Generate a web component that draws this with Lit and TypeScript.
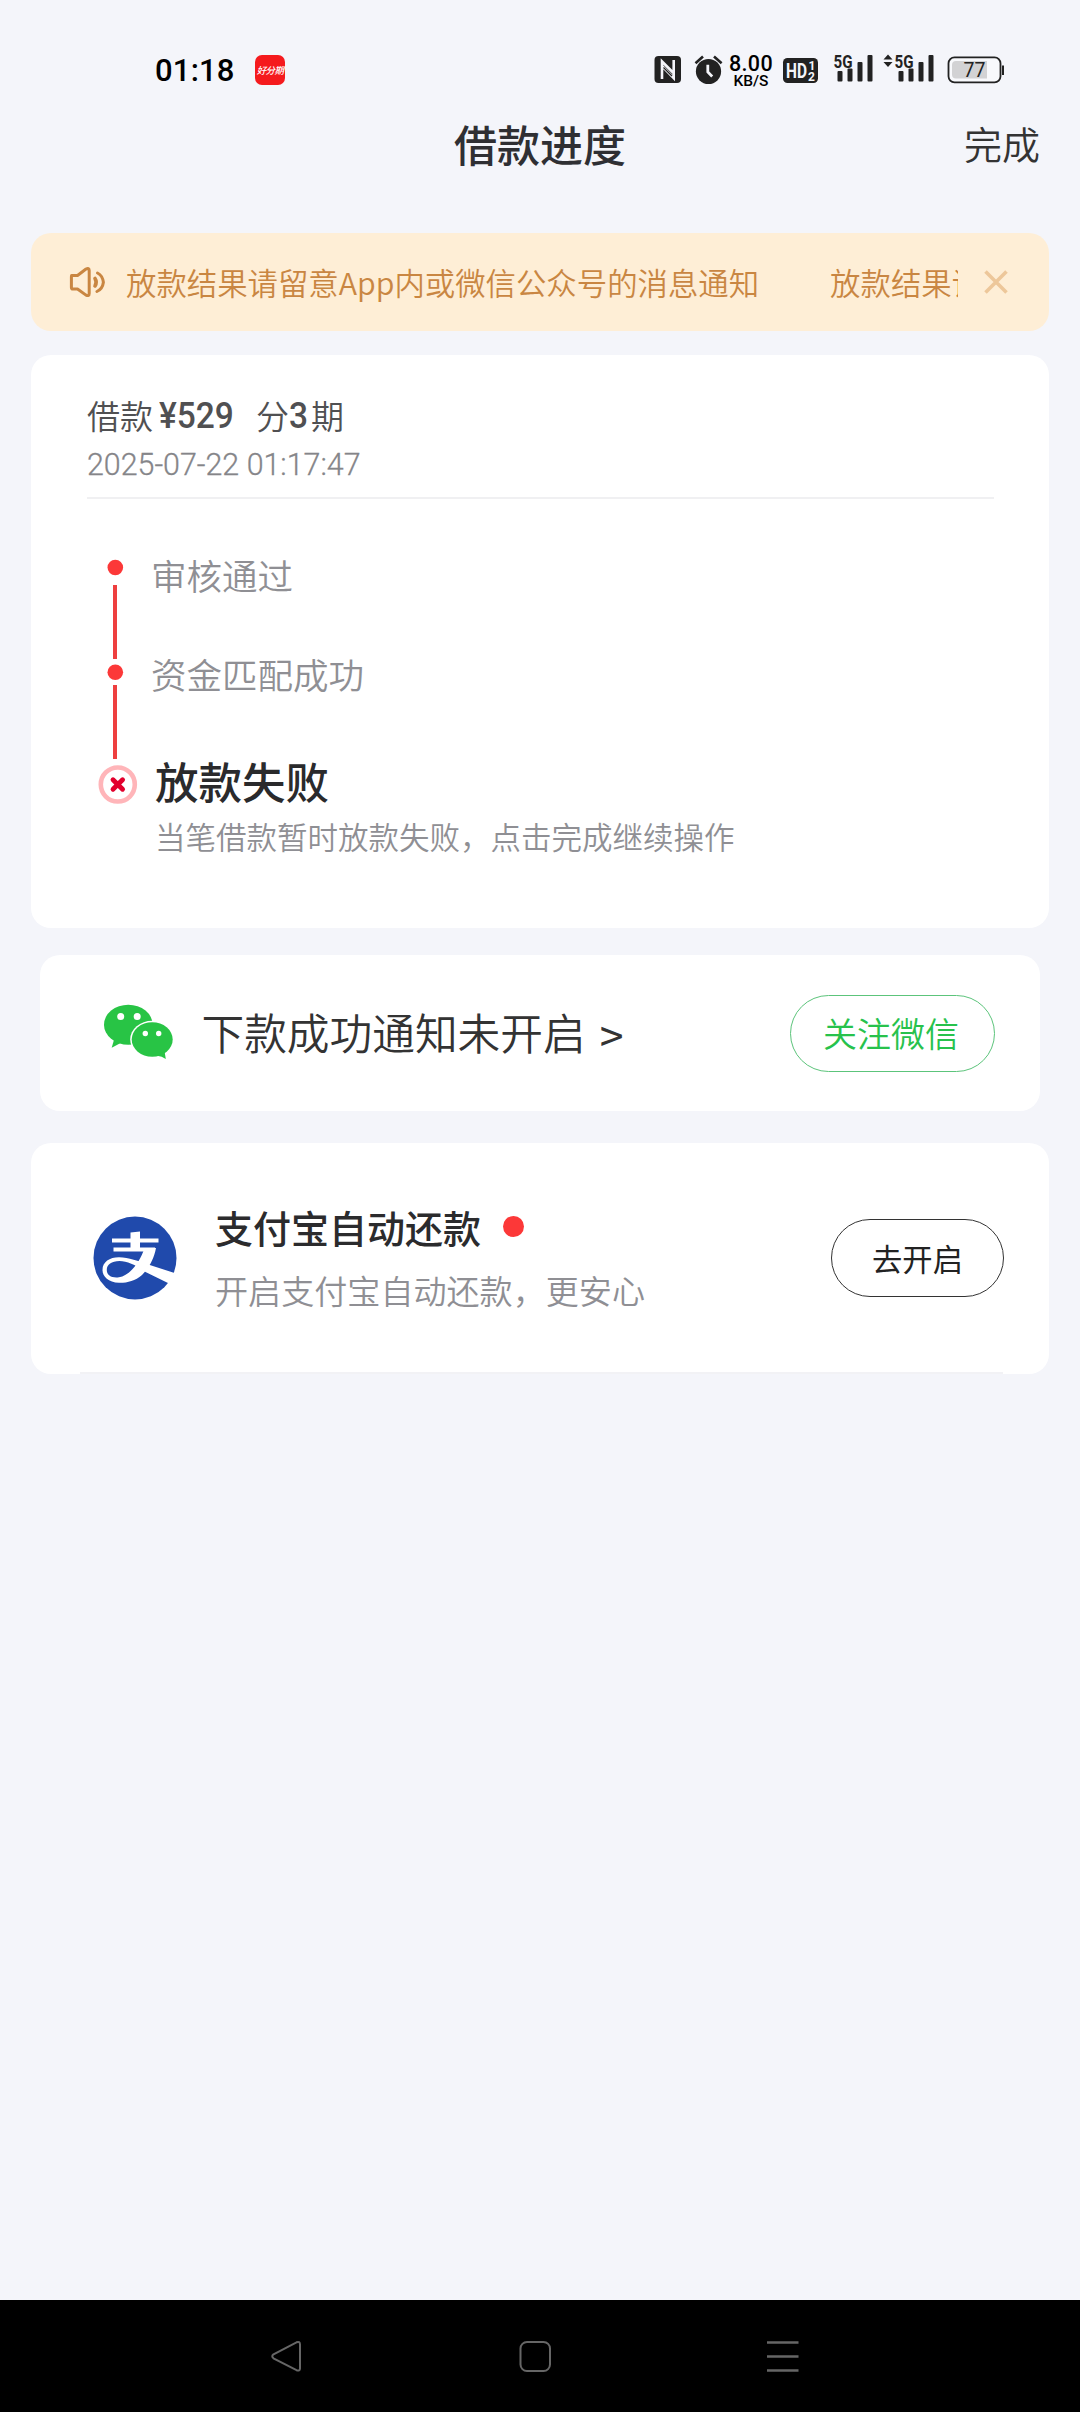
import { LitElement, html, css, svg } from "lit";
import { customElement } from "lit/decorators.js";

const FONT = css`"Noto Sans CJK SC", "Noto Sans", sans-serif`;

@customElement("status-bar")
class StatusBar extends LitElement {
  static styles = css`
    :host { display: flex; height: 100px; padding: 0 76px 0 155px; box-sizing: border-box; align-items: flex-start; color: #000; font-family: Roboto, sans-serif; }
    svg { display: block; flex: none; }
    .time { font-size: 31px; line-height: 36px; margin-top: 53px; width: 100px; font-weight: 500; letter-spacing: 0.2px; white-space: nowrap; }
    .app { width: 30px; height: 30px; margin-top: 55px; border-radius: 7px; background: #f51a1d; color: #fff; display: flex; align-items: center; justify-content: center; font: italic 500 9.5px/30px ${FONT}; letter-spacing: -0.6px; white-space: nowrap; }
    .icons { display: flex; margin: 50px 0 0 auto; }
    .speed { width: 44px; margin-right: 8px; text-align: center; padding-top: 4px; font-weight: 500; white-space: nowrap; }
    .rate { font-size: 21.5px; line-height: 19px; letter-spacing: 0.3px; }
    .unit { font-size: 15.5px; line-height: 17px; }
  `;

  private bars(x: number) {
    return svg`<g fill="#222">
      <rect x=${x} y="21" width="5" height="10.5" rx="1"/>
      <rect x=${x + 10} y="18.500" width="5" height="13" rx="1"/>
      <rect x=${x + 20} y="12" width="5" height="19.5" rx="1"/>
      <rect x=${x + 30} y="5" width="5" height="26.5" rx="1"/></g>`;
  }

  render() {
    return html`
      <div class="time">01:18</div>
      <div class="app">好分期</div>
      <div class="icons">
        <svg width="75" height="38" viewBox="0 0 75 38">
          <rect x="0.5" y="6" width="26.5" height="27" rx="4" fill="#222"/>
          <path d="M8 29V11.500L19.500 23M19.700 10v18L8 16" fill="none" stroke="#f4f5fa" stroke-width="2.600"/>
          <path d="M9.500 17.500L18 26" fill="none" stroke="#222" stroke-width="1.200"/>
          <circle cx="54.500" cy="21.500" r="12.600" fill="#222"/>
          <path d="M41.500 13.200L49 6.500M67.600 13.200L60 6.500" stroke="#222" stroke-width="2.600" fill="none"/>
          <path d="M53.800 14.800v7.200l4.400 4.400" stroke="#f4f5fa" stroke-width="2.800" fill="none"/>
        </svg>
        <div class="speed"><div class="rate">8.00</div><div class="unit">KB/S</div></div>
        <svg width="223" height="38" viewBox="781 0 223 38">
          <rect x="783" y="8" width="35" height="25" rx="4.500" fill="#222"/>
          <text x="786" y="27.500" font-family="Roboto" font-weight="700" font-size="19.500" fill="#f4f5fa" textLength="21" lengthAdjust="spacingAndGlyphs">HD</text>
          <text x="808.500" y="20" font-family="Roboto" font-weight="700" font-size="12" fill="#f4f5fa">1</text>
          <text x="808" y="30.500" font-family="Roboto" font-weight="700" font-size="12" fill="#f4f5fa">2</text>
          <text x="833.500" y="17.500" font-family="Roboto" font-weight="700" font-size="18.500" fill="#222" textLength="19" lengthAdjust="spacingAndGlyphs">5G</text>
          ${this.bars(837.5)}
          <path d="M883.500 9.500l4.500-5 4.500 5zM883.500 12l4.500 5 4.500-5z" fill="#222"/>
          <text x="894.500" y="17.500" font-family="Roboto" font-weight="700" font-size="18.500" fill="#222" textLength="19" lengthAdjust="spacingAndGlyphs">5G</text>
          ${this.bars(898.5)}
          <rect x="948.500" y="7.300" width="52" height="25" rx="6" fill="#f8f9fc" stroke="#222" stroke-width="1.800"/>
          <path d="M987 11H956a4 4 0 0 0-4 4v9.500a4 4 0 0 0 4 4h31z" fill="#d2d2d4"/>
          <rect x="1002" y="15.500" width="2" height="9.500" fill="#222"/>
          <text x="963.500" y="27" font-family="Roboto" font-size="19.500" fill="#222">77</text>
        </svg>
      </div>`;
  }
}

@customElement("notice-bar")
class NoticeBar extends LitElement {
  static styles = css`
    :host { display: flex; height: 98px; border-radius: 20px; background: #feeed6; align-items: center; padding-left: 38.4px; box-sizing: border-box; color: #c98642; font-family: ${FONT}; }
    svg { flex: none; display: block; }
    .view { margin-left: 19px; width: 832px; overflow: hidden; display: flex; gap: 71px; white-space: nowrap; font-size: 30.4px; line-height: 48px; font-weight: 350; }
    .view span { flex: none; }
    .close { margin-left: 26px; }
  `;
  render() {
    const message = "放款结果请留意App内或微信公众号的消息通知";
    return html`
      <svg width="38" height="32" viewBox="0 0 38 32" fill="none" stroke="#c98642" stroke-width="3" stroke-linejoin="round" stroke-linecap="round">
        <path d="M2.500 9.500H8.500L17 3q3.200-1.600 3.200 1.600v23q0 3-3.200 1.500L8.500 23H4q-1.600 0-1.600-1.600V10.600"/>
        <path d="M26 12.500q2.400 3.700 0 7.400" stroke-width="3.600"/><path d="M28.500 7q5 2.500 5.900 9.300-.8 6.700-6.500 9.200"/>
      </svg>
      <div class="view"><span>${message}</span><span>${message}</span></div>
      <svg class="close" width="24" height="24" viewBox="0 0 24 24"><path d="M1.500 1.500l21 21M22.500 1.500l-21 21" stroke="#edc79a" stroke-width="3.600"/></svg>`;
  }
}

@customElement("progress-card")
class ProgressCard extends LitElement {
  static styles = css`
    :host { display: block; height: 573px; border-radius: 20px; background: #fff; padding: 36px 55px 0 56.4px; box-sizing: border-box; font-family: ${FONT}; }
    .sum { display: flex; height: 48px; line-height: 48px; font-size: 33px; font-weight: 350; color: #505052; white-space: nowrap; }
    .num { font-family: Roboto, sans-serif; font-weight: 500; font-size: 36px; transform-origin: 0 50%; transform: scaleX(0.93); position: relative; top: 1px; }
    .amount { width: 97px; margin-left: 6px; }
    .count { width: 22px; }
    .date { height: 36px; line-height: 36px; margin-top: 8px; font-family: Roboto, sans-serif; font-weight: 300; font-size: 31px; color: #858589; -webkit-text-stroke: 0.3px #858589; transform-origin: 0 50%; transform: scaleX(0.98); white-space: pre; }
    .rule { height: 2px; background: #f0f0f2; margin-top: 14px; }
    .steps { display: flex; padding-top: 56px; }
    .steps svg { display: block; flex: none; margin-left: 6.600px; }
    .labels { display: flex; flex-direction: column; white-space: nowrap; margin: -5px 0 0 9.500px; color: #8f8f94; }
    .step { font-size: 35.500px; line-height: 50px; height: 98.500px; font-weight: 350; }
    .fail { font-size: 43.500px; line-height: 60px; font-weight: 500; color: #2a2a2c; margin: 4px 0 0 4px; }
    .note { font-size: 30.500px; line-height: 46px; margin: 2px 0 0 4px; font-weight: 350; }
  `;
  render() {
    return html`
      <div class="sum"><span>借款</span><span class="num amount">¥529</span><span>分</span><span class="num count">3</span><span>期</span></div>
      <div class="date">2025-07-22 01:17:47</div>
      <div class="rule"></div>
      <div class="steps">
        <svg width="48" height="254" viewBox="94 555 48 254">
          <g fill="#fc3838"><circle cx="115.300" cy="567.500" r="7.800"/><circle cx="115.300" cy="672.300" r="7.800"/></g>
          <g fill="#ee3f3f"><rect x="113" y="585" width="4" height="74"/><rect x="113" y="685" width="4" height="74"/></g>
          <circle cx="117.800" cy="784.500" r="17" fill="#fff" stroke="#ffb5b9" stroke-width="4.600"/>
          <path d="M113 779.700l9.600 9.600m0-9.600l-9.600 9.600" stroke="#e2002d" stroke-width="4.800" stroke-linecap="round"/>
        </svg>
        <div class="labels">
          <div class="step">审核通过</div>
          <div class="step">资金匹配成功</div>
          <div class="fail">放款失败</div>
          <div class="note">当笔借款暂时放款失败，点击完成继续操作</div>
        </div>
      </div>`;
  }
}

@customElement("wechat-card")
class WechatCard extends LitElement {
  static styles = css`
    :host { display: flex; height: 156px; border-radius: 20px; background: #fff; margin: 0 9.400px; padding: 0 45px 0 63px; box-sizing: border-box; align-items: center; font-family: ${FONT}; white-space: nowrap; }
    svg { display: block; flex: none; }
    .title { font-size: 42.700px; line-height: 60px; color: #333; font-weight: 350; margin-left: 26.500px; padding-bottom: 5px; }
    .arrow { font-size: 42.700px; line-height: 60px; color: #333; margin-left: 14px; }
    .btn { margin: 0 0 0 auto; box-sizing: border-box; width: 205px; height: 77px; border: 1.500px solid #5cc47b; border-radius: 39px; color: #27c24c; font-size: 34px; line-height: 74px; padding-right: 3px; font-weight: 350; text-align: center; }
  `;
  render() {
    return html`
      <svg width="72" height="58" viewBox="-1 0 72 58">
        <g fill="#28c445"><ellipse cx="24.300" cy="20.700" rx="24.300" ry="20"/><path d="M10.500 34L7.700 43.800 18.500 38z"/></g>
        <ellipse cx="48.200" cy="35.500" rx="22" ry="18.700" fill="#fff"/>
        <g fill="#28c445"><ellipse cx="48.200" cy="35.500" rx="20.500" ry="17.200"/><path d="M53 51.800q5 .2 8.800 3.200L60.500 47z"/></g>
        <g fill="#fff"><circle cx="16.700" cy="12.600" r="3.500"/><circle cx="33.200" cy="12.600" r="3.500"/><circle cx="41.300" cy="29.500" r="2.700"/><circle cx="54.700" cy="29.500" r="2.700"/></g>
      </svg>
      <span class="title">下款成功通知未开启</span><span class="arrow">&gt;</span>
      <div class="btn">关注微信</div>`;
  }
}

@customElement("alipay-card")
class AlipayCard extends LitElement {
  static styles = css`
    :host { display: flex; flex-direction: column; height: 231px; border-radius: 20px; background: #fff; font-family: ${FONT}; white-space: nowrap; }
    .row { display: flex; flex: 1; padding: 0 45.400px 0 62.400px; align-items: center; }
    svg { display: block; flex: none; }
    .texts { margin-left: 38px; margin-top: -3px; }
    .head { display: flex; align-items: center; font-size: 38px; line-height: 56px; font-weight: 500; color: #2b2b2d; }
    .dot { width: 21px; height: 21px; border-radius: 50%; background: #fc3838; margin: 0 0 1px 21.500px; }
    .sub { font-size: 33.100px; line-height: 48px; margin-top: 11px; color: #8f8f94; font-weight: 350; }
    .btn { margin-left: auto; box-sizing: border-box; width: 173px; height: 78px; border: 1.500px solid #333; border-radius: 39px; color: #222; font-size: 30.300px; line-height: 76px; text-align: center; }
    .rule { height: 2px; margin: 0 46.400px 0 49.400px; background: #f2f2f5; }
  `;
  render() {
    return html`
      <div class="row">
        <svg width="84" height="84" viewBox="0 0 84 84">
          <circle cx="42" cy="42" r="41.500" fill="#204aac"/>
          <path d="M19 24.500H65.500M20.500 33.400H62" stroke="#fff" stroke-width="4"/>
          <path d="M37.500 16.500l9.500-1V34h-9.500z" fill="#fff"/>
          <path d="M51.500 32H63C61 43 56 52 49 59 42 65 34 67 26 66.800 15.500 66.500 9.500 60.500 9.500 54 9.500 46 16.500 41.300 26 41.300 36 41.500 45 45 56 48.700L81.500 57 Q80 62.500 76 67.500L51.500 55.500C42 48.500 34 45 26.500 45 18.500 45 13.800 48.500 13.800 54 13.800 59.500 19 62.300 26 61.300 37 59.500 47 46 51.500 32z" fill="#fff"/>
        </svg>
        <div class="texts">
          <div class="head">支付宝自动还款<span class="dot"></span></div>
          <div class="sub">开启支付宝自动还款，更安心</div>
        </div>
        <div class="btn">去开启</div>
      </div>
      <div class="rule"></div>`;
  }
}

@customElement("app-root")
class AppRoot extends LitElement {
  static styles = css`
    :host { display: flex; flex-direction: column; width: 1080px; height: 2412px; background: #f4f5fa; overflow: hidden; font-family: ${FONT}; }
    .bar { display: grid; grid-template-columns: 1fr auto 1fr; height: 90px; align-items: center; padding: 0 40px 5px 40px; box-sizing: border-box; color: #2f2f33; white-space: nowrap; }
    .title { grid-column: 2; font-size: 43px; line-height: 60px; font-weight: 500; }
    .done { justify-self: end; font-size: 38px; line-height: 56px; color: #333; font-weight: 350; }
    .main { flex: 1; padding: 43px 30.600px 0; }
    .progress { margin-top: 24px; }
    .wechat { margin-top: 27px; }
    .alipay { margin-top: 32px; }
    .nav { height: 112px; background: #000; display: flex; padding-left: 270px; }
    .nav svg { display: block; margin-top: 40px; }
  `;
  render() {
    return html`
      <status-bar></status-bar>
      <div class="bar"><span class="title">借款进度</span><span class="done">完成</span></div>
      <div class="main">
        <notice-bar></notice-bar>
        <progress-card class="progress"></progress-card>
        <wechat-card class="wechat"></wechat-card>
        <alipay-card class="alipay"></alipay-card>
      </div>
      <div class="nav">
        <svg width="530" height="34" viewBox="270 2340 530 34" fill="none" stroke="#666" stroke-width="2">
          <path d="M273.500 2354.300L296.500 2342.300Q300 2341 300 2344.500V2368.500Q300 2371.500 296.500 2370.200L273.500 2358.300Q271 2356.300 273.500 2354.300Z"/>
          <rect x="520.500" y="2342" width="29.500" height="29" rx="6.500"/>
          <path d="M767 2342.500h31.500M767 2356.500h31.500M767 2370.500h31.500" stroke-width="2.500"/>
        </svg>
      </div>`;
  }
}
